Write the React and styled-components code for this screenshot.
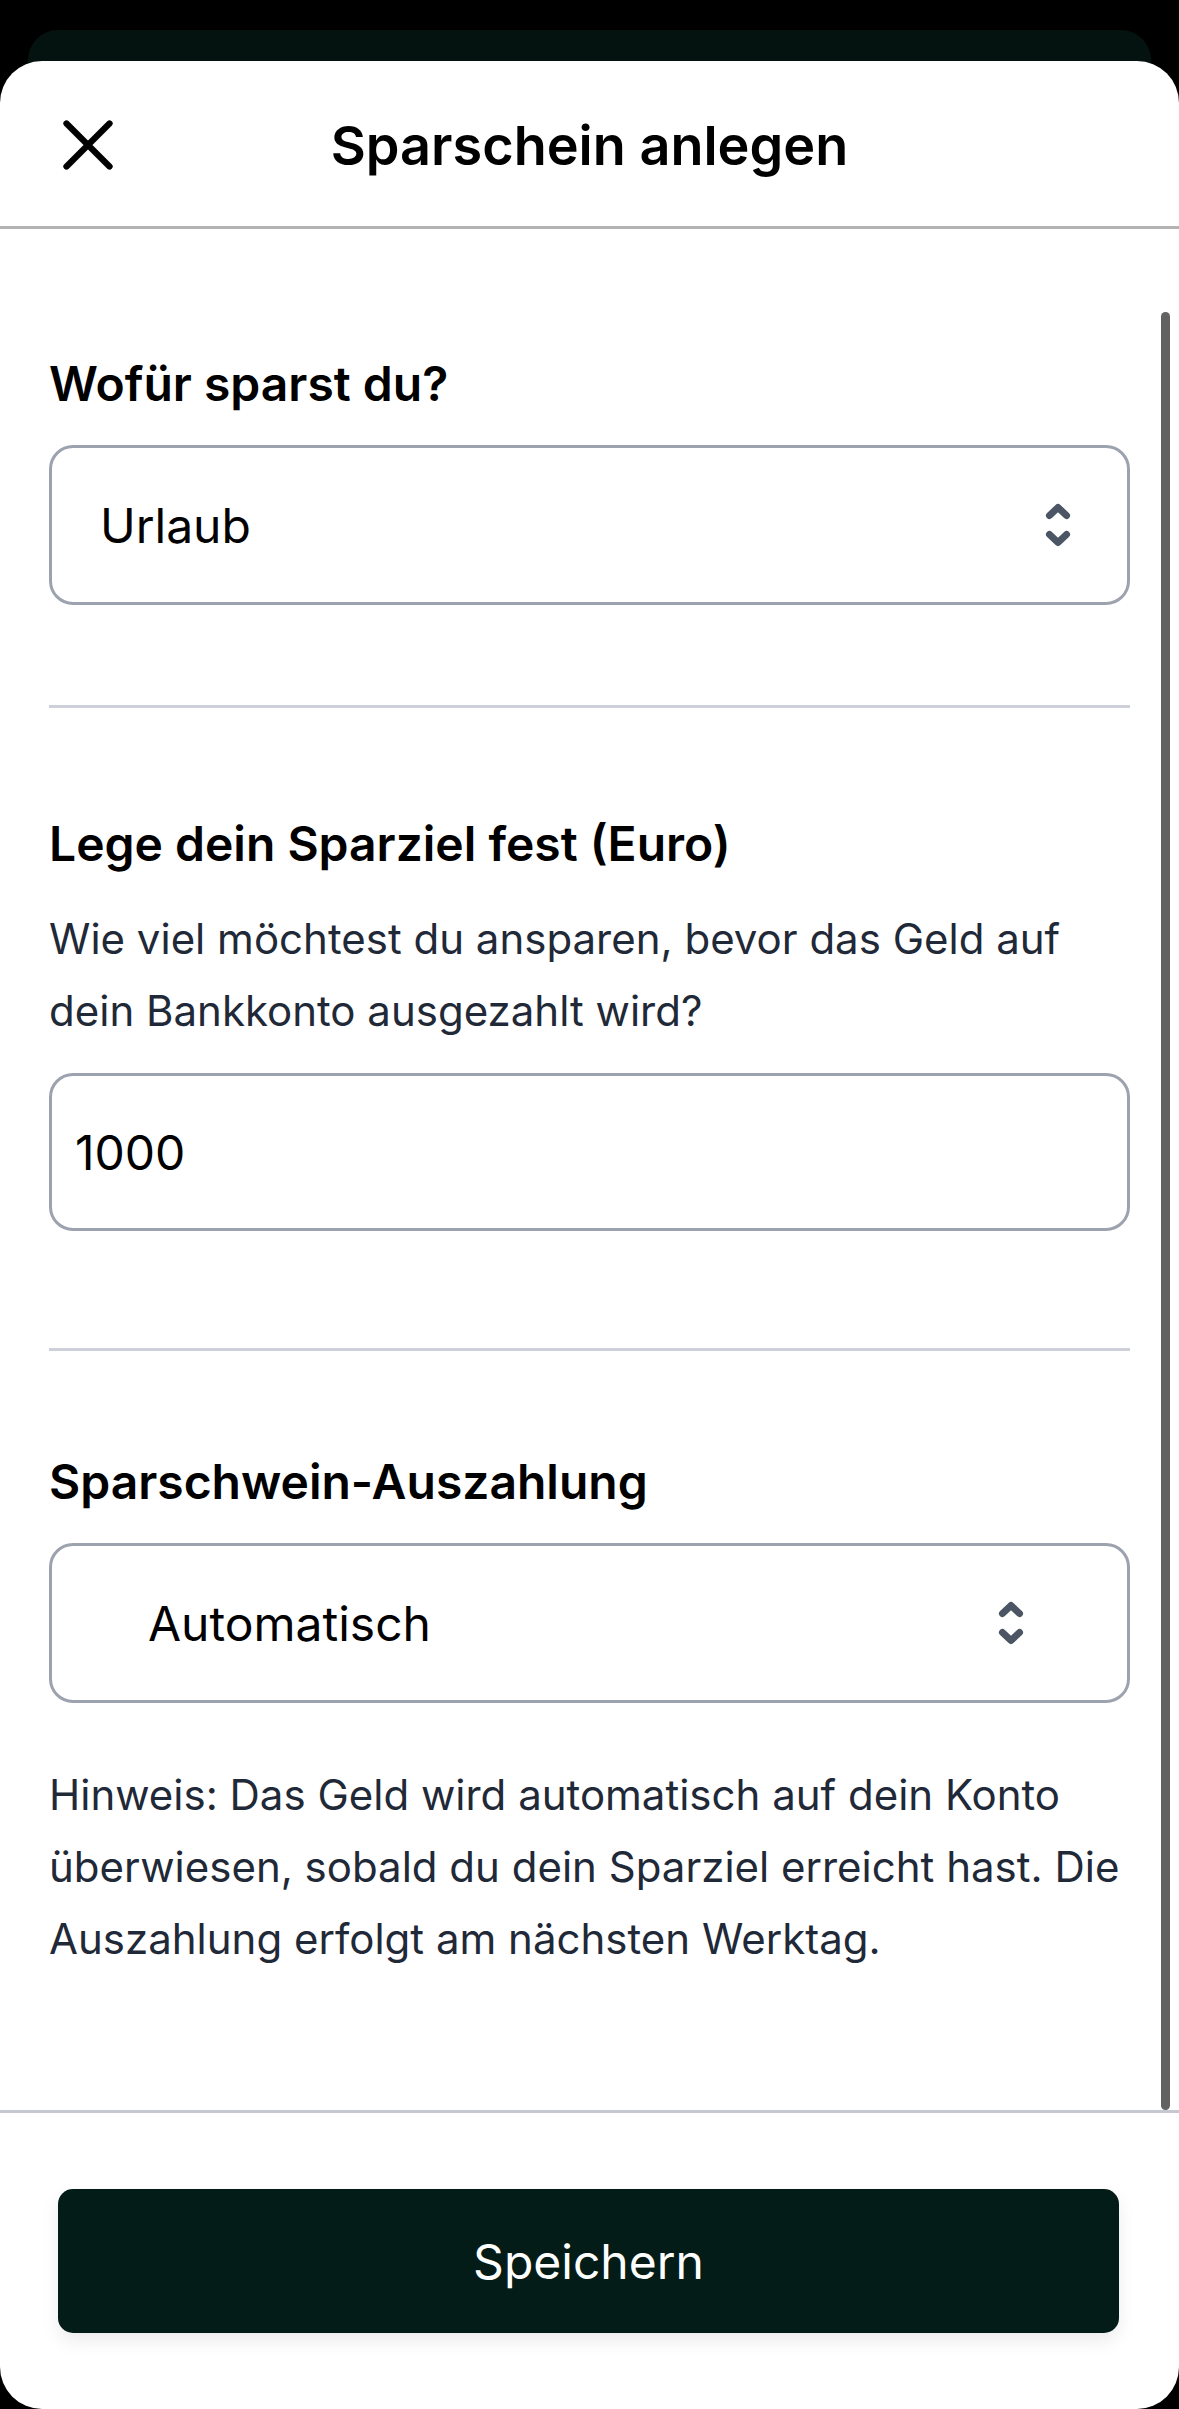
import styled, { createGlobalStyle } from 'styled-components';

const GlobalStyle = createGlobalStyle`
  html, body {
    margin: 0;
    padding: 0;
    background: #000;
  }
  body {
    font-family: Inter, "Noto Sans", sans-serif;
    -webkit-font-smoothing: antialiased;
  }
  * {
    box-sizing: border-box;
  }
`;

const Screen = styled.div`
  height: 2409px;
  padding-top: 30px;
  display: flex;
  flex-direction: column;
  overflow: hidden;
`;

/* the screen lying behind the sheet */
const BackCard = styled.div`
  height: 73px;
  margin: 0 28px -42px;
  background: #041210;
  border-radius: 30px 30px 0 0;
  flex-shrink: 0;
`;

const Sheet = styled.div`
  position: relative;
  flex: 1;
  background: #fff;
  border-radius: 42px;
  display: flex;
  flex-direction: column;
  overflow: hidden;
`;

const Header = styled.header`
  height: 168px;
  padding: 3px 40px 0;
  border-bottom: 3px solid #b3b3b3;
  display: grid;
  grid-template-columns: 1fr auto 1fr;
  align-items: center;
  flex-shrink: 0;
`;

const CloseButton = styled.button`
  width: 96px;
  height: 96px;
  padding: 0;
  border: none;
  background: none;
  color: #000;
  display: flex;
  align-items: center;
  justify-content: center;
`;

const Title = styled.h1`
  margin: 0;
  font-size: 54px;
  font-weight: 600;
  color: #000;
`;

const Body = styled.main`
  position: relative;
  flex: 1;
  padding: 125px 49px 0;
  display: flex;
  flex-direction: column;
`;

const ScrollThumb = styled.div`
  position: absolute;
  top: 83px;
  right: 9px;
  bottom: 0;
  width: 9px;
  border-radius: 5px;
  background: #626262;
`;

const Label = styled.h2`
  margin: ${(p) => p.$top || 0}px 0 0;
  font-size: 48px;
  line-height: 60px;
  font-weight: 600;
  color: #000;
`;

const Text = styled.p`
  margin: ${(p) => p.$top || 0}px 0 0;
  font-size: 42px;
  line-height: 72px;
  color: #1f2937;
`;

const SelectBox = styled.div`
  margin-top: ${(p) => p.$top || 0}px;
  height: 160px;
  border: 3px solid #9ca3af;
  border-radius: 24px;
  padding: 0 ${(p) => p.$right}px 0 ${(p) => p.$left}px;
  display: flex;
  align-items: center;
  justify-content: space-between;
  font-size: 48px;
  color: #000;
`;

const NumberInput = styled.input`
  margin-top: ${(p) => p.$top || 0}px;
  width: 100%;
  height: 158px;
  border: 3px solid #9ca3af;
  border-radius: 24px;
  padding: 0 0 0 23px;
  font: inherit;
  font-size: 48px;
  color: #000;
  background: #fff;
  outline: none;
`;

const Divider = styled.hr`
  margin: ${(p) => p.$top || 0}px 0 0;
  height: 3px;
  border: none;
  background: #cdd0d8;
`;

const Footer = styled.footer`
  flex-shrink: 0;
  height: 299px;
  border-top: 3px solid #c5c8d0;
  padding: 76px 60px 0 58px;
`;

const SaveButton = styled.button`
  width: 100%;
  height: 144px;
  border: none;
  border-radius: 15px;
  background: #031c17;
  color: #fff;
  font: inherit;
  font-size: 48px;
  font-weight: 400;
  box-shadow: 0 8px 18px rgba(0, 0, 0, 0.08);
`;

function CloseIcon() {
  return (
    <svg width="86" height="86" viewBox="0 0 24 24" fill="none" stroke="currentColor" strokeWidth="1.75" strokeLinecap="round">
      <path d="M6 18 18 6M6 6l12 12" />
    </svg>
  );
}

function UpDownIcon() {
  return (
    <svg width="26" height="44" viewBox="0 0 26 44" fill="none" stroke="#4b5563" strokeWidth="7" strokeLinecap="round" strokeLinejoin="round">
      <path d="M4.5 12.5 13 4.5l8.5 8" />
      <path d="M4.5 31.5 13 39.5l8.5-8" />
    </svg>
  );
}

export default function App() {
  return (
    <>
      <GlobalStyle />
      <Screen>
        <BackCard />
        <Sheet>
          <Header>
            <CloseButton aria-label="Schließen">
              <CloseIcon />
            </CloseButton>
            <Title>Sparschein anlegen</Title>
            <span />
          </Header>

          <Body>
            <ScrollThumb />

            <Label>Wofür sparst du?</Label>
            <SelectBox $top={31} $left={48} $right={56}>
              <span>Urlaub</span>
              <UpDownIcon />
            </SelectBox>

            <Divider $top={100} />

            <Label $top={106}>Lege dein Sparziel fest (Euro)</Label>
            <Text $top={29}>
              Wie viel möchtest du ansparen, bevor das Geld auf dein Bankkonto ausgezahlt wird?
            </Text>
            <NumberInput $top={26} type="text" defaultValue="1000" />

            <Divider $top={117} />

            <Label $top={101}>Sparschwein-Auszahlung</Label>
            <SelectBox $top={31} $left={96} $right={103}>
              <span>Automatisch</span>
              <UpDownIcon />
            </SelectBox>
            <Text $top={56}>
              Hinweis: Das Geld wird automatisch auf dein Konto überwiesen, sobald du dein Sparziel
              erreicht hast. Die Auszahlung erfolgt am nächsten Werktag.
            </Text>
          </Body>

          <Footer>
            <SaveButton>Speichern</SaveButton>
          </Footer>
        </Sheet>
      </Screen>
    </>
  );
}
